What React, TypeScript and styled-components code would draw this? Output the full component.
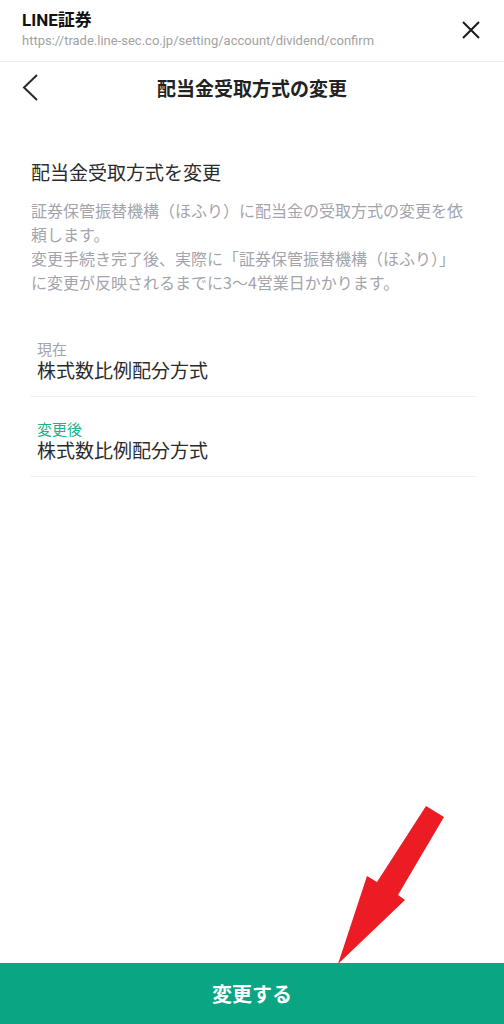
import React from "react";
import styled, { createGlobalStyle } from "styled-components";

const GlobalStyle = createGlobalStyle`
  html, body {
    margin: 0;
    padding: 0;
    background: #ffffff;
  }
  body {
    font-family: Roboto, "Noto Sans CJK JP", sans-serif;
    color: #2b2b2b;
  }
  * { box-sizing: border-box; }
`;

const Page = styled.div`
  position: relative;
  display: flex;
  flex-direction: column;
  min-height: 100vh;
  width: 100%;
`;

const TopBar = styled.header`
  display: flex;
  align-items: flex-start;
  justify-content: space-between;
  height: 62px;
  padding: 9px 24px 0 22px;
  border-bottom: 1px solid #ececec;
`;

const SiteInfo = styled.div`
  display: flex;
  flex-direction: column;
`;

const SiteName = styled.div`
  font-family: Roboto, "Noto Sans CJK JP", sans-serif;
  font-weight: 700;
  font-size: 17px;
  line-height: 22px;
  color: #111;
`;

const SiteUrl = styled.div`
  font-family: Roboto, sans-serif;
  font-size: 13px;
  line-height: 17px;
  color: #a2a2a2;
  margin-top: 1px;
`;

const IconButton = styled.button`
  border: none;
  background: none;
  padding: 0;
  margin-top: 12px;
  display: flex;
  cursor: pointer;
`;

const NavBar = styled.nav`
  display: flex;
  align-items: center;
  justify-content: center;
  position: relative;
  height: 52px;
`;

const BackButton = styled.button`
  position: absolute;
  left: 22px;
  top: 12px;
  border: none;
  background: none;
  padding: 0;
  display: flex;
  cursor: pointer;
`;

const NavTitle = styled.h1`
  margin: 0;
  font-family: "Noto Sans CJK JP", sans-serif;
  font-weight: 700;
  font-size: 19px;
  line-height: 26px;
  color: #222;
`;

const Content = styled.main`
  padding: 44px 29px 0 31px;
  font-family: "Noto Sans CJK JP", sans-serif;
`;

const Heading = styled.h2`
  margin: 0;
  font-weight: 400;
  font-size: 19px;
  line-height: 28px;
  color: #2b2b2b;
`;

const Description = styled.p`
  margin: 12px 0 0;
  max-width: 434px;
  font-size: 16px;
  line-height: 24px;
  color: #a4a4ac;
`;

const Rows = styled.div`
  margin-top: 23px;
  margin-right: -1px;
  margin-left: -1px;
`;

const Row = styled.div`
  padding: 22px 7px 14px;
  border-bottom: 1px solid #f1f1f1;
`;

const RowLabel = styled.div<{ $accent?: boolean }>`
  font-size: 15px;
  line-height: 19px;
  color: ${(p) => (p.$accent ? "#1bb189" : "#a4a4ac")};
`;

const RowValue = styled.div`
  font-size: 19px;
  line-height: 24px;
  color: #2b2b2b;
`;

const Footer = styled.footer`
  margin-top: auto;
`;

const SubmitButton = styled.button`
  width: 100%;
  height: 61px;
  border: none;
  background: #0aa582;
  color: #ffffff;
  font-family: "Noto Sans CJK JP", sans-serif;
  font-weight: 700;
  font-size: 20px;
  cursor: pointer;
`;

const Annotation = styled.svg`
  position: absolute;
  left: 0;
  top: 0;
  pointer-events: none;
`;

const rows = [
  { label: "現在", value: "株式数比例配分方式", accent: false },
  { label: "変更後", value: "株式数比例配分方式", accent: true },
];

export default function App() {
  return (
    <>
      <GlobalStyle />
      <Page>
        <TopBar>
          <SiteInfo>
            <SiteName>LINE証券</SiteName>
            <SiteUrl>https://trade.line-sec.co.jp/setting/account/dividend/confirm</SiteUrl>
          </SiteInfo>
          <IconButton aria-label="close">
            <svg width="18" height="18" viewBox="0 0 18 18">
              <path d="M1 1 L17 17 M17 1 L1 17" stroke="#1a1a1a" strokeWidth="2" />
            </svg>
          </IconButton>
        </TopBar>
        <NavBar>
          <BackButton aria-label="back">
            <svg width="16" height="28" viewBox="0 0 16 28">
              <path d="M15 1 L2 13.5 L15 26" stroke="#2a2a2a" strokeWidth="2" fill="none" />
            </svg>
          </BackButton>
          <NavTitle>配当金受取方式の変更</NavTitle>
        </NavBar>
        <Content>
          <Heading>配当金受取方式を変更</Heading>
          <Description>
            証券保管振替機構（ほふり）に配当金の受取方式の変更を依頼します。
            <br />
            変更手続き完了後、実際に「証券保管振替機構（ほふり）」に変更が反映されるまでに3〜4営業日かかります。
          </Description>
          <Rows>
            {rows.map((r) => (
              <Row key={r.label}>
                <RowLabel $accent={r.accent}>{r.label}</RowLabel>
                <RowValue>{r.value}</RowValue>
              </Row>
            ))}
          </Rows>
        </Content>
        <Footer>
          <SubmitButton>変更する</SubmitButton>
        </Footer>
        <Annotation width="504" height="1024" viewBox="0 0 504 1024">
          <polygon
            points="426,806 444,817 398,895 405,900 338,964 367,876 377,882"
            fill="#ec1c24"
          />
        </Annotation>
      </Page>
    </>
  );
}
